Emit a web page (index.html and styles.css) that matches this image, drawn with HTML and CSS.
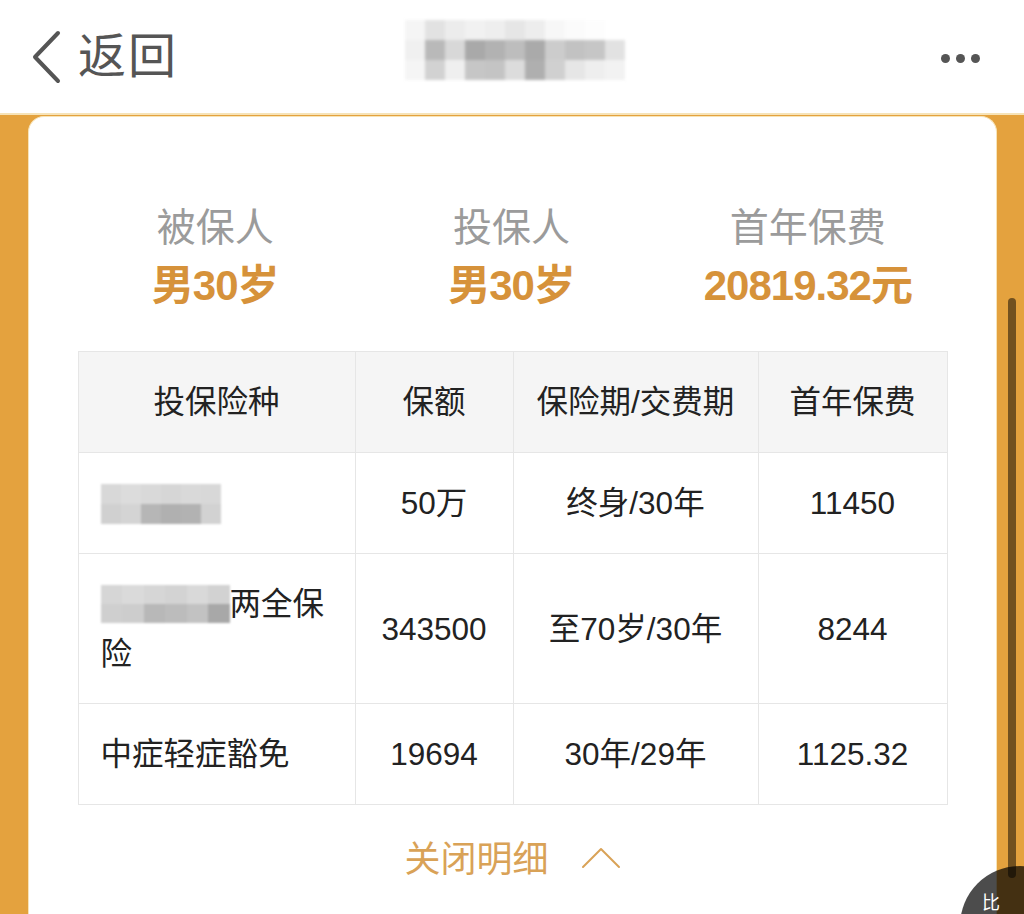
FILE: index.html
```html
<!DOCTYPE html>
<html lang="zh-CN">

<head>
	<meta charset="UTF-8">
	<title>保费明细</title>
	<link rel="stylesheet" href="styles.css">
</head>

<body>
	<header class="topbar">
		<div class="back">
			<svg class="back-icon" width="32" height="54" viewBox="0 0 32 54">
				<path d="M28 3 L5 27 L28 51" fill="none" stroke="#555" stroke-width="4" stroke-linecap="round" stroke-linejoin="round" />
			</svg>
			<span class="back-text">返回</span>
		</div>
		<div class="title-mosaic">
			<i style="background:#f5f5f5"></i><i style="background:#e2e2e2"></i><i style="background:#ececec"></i><i style="background:#f1f1f1"></i><i style="background:#eeeeee"></i><i style="background:#e6e6e6"></i><i style="background:#ededed"></i><i style="background:#f7f7f7"></i><i style="background:#fbfbfb"></i><i style="background:#fdfdfd"></i><i style="background:#fff"></i>
			<i style="background:#f0f0f0"></i><i style="background:#b9b9b9"></i><i style="background:#d8d8d8"></i><i style="background:#a9a9a9"></i><i style="background:#b2b2b2"></i><i style="background:#bdbdbd"></i><i style="background:#aaaaaa"></i><i style="background:#cccccc"></i><i style="background:#c2c2c2"></i><i style="background:#c6c6c6"></i><i style="background:#e2e2e2"></i>
			<i style="background:#f5f5f5"></i><i style="background:#d2d2d2"></i><i style="background:#efefef"></i><i style="background:#c6c6c6"></i><i style="background:#c4c4c4"></i><i style="background:#dcdcdc"></i><i style="background:#afafaf"></i><i style="background:#d0d0d0"></i><i style="background:#e6e6e6"></i><i style="background:#eeeeee"></i><i style="background:#f2f2f2"></i>
		</div>
		<div class="more"><i></i><i></i><i></i></div>
	</header>

	<main class="page">
		<section class="card">
			<div class="summary">
				<div class="summary-item">
					<div class="summary-label">被保人</div>
					<div class="summary-value">男30岁</div>
				</div>
				<div class="summary-item">
					<div class="summary-label">投保人</div>
					<div class="summary-value">男30岁</div>
				</div>
				<div class="summary-item">
					<div class="summary-label">首年保费</div>
					<div class="summary-value">20819.32元</div>
				</div>
			</div>

			<table class="plan">
				<colgroup>
					<col style="width:277px">
					<col style="width:158px">
					<col style="width:245px">
					<col style="width:189px">
				</colgroup>
				<thead>
					<tr>
						<th>投保险种</th>
						<th>保额</th>
						<th>保险期/交费期</th>
						<th>首年保费</th>
					</tr>
				</thead>
				<tbody>
					<tr>
						<td class="name">
							<span class="mosaic">
								<i style="background:#d8d8d8"></i><i style="background:#dcdcdc"></i><i style="background:#d9d9d9"></i><i style="background:#d6d6d6"></i><i style="background:#d9d9d9"></i><i style="background:#d8d8d8"></i>
								<i style="background:#d0d0d0"></i><i style="background:#d4d4d4"></i><i style="background:#b6b6b6"></i><i style="background:#b0b0b0"></i><i style="background:#b2b2b2"></i><i style="background:#d2d2d2"></i>
							</span>
						</td>
						<td>50万</td>
						<td>终身/30年</td>
						<td>11450</td>
					</tr>
					<tr class="tall">
						<td class="name">
							<span class="mosaic wide">
								<i style="background:#d6d6d6"></i><i style="background:#dadada"></i><i style="background:#d6d6d6"></i><i style="background:#d3d3d3"></i><i style="background:#d9d9d9"></i><i style="background:#d2d2d2"></i>
								<i style="background:#cfcfcf"></i><i style="background:#cdcdcd"></i><i style="background:#b8b8b8"></i><i style="background:#bcbcbc"></i><i style="background:#c2c2c2"></i><i style="background:#a8a8a8"></i>
							</span>两全保险
						</td>
						<td>343500</td>
						<td>至70岁/30年</td>
						<td>8244</td>
					</tr>
					<tr>
						<td class="name">中症轻症豁免</td>
						<td>19694</td>
						<td>30年/29年</td>
						<td>1125.32</td>
					</tr>
				</tbody>
			</table>

			<div class="toggle">
				<span>关闭明细</span>
				<svg width="40" height="24" viewBox="0 0 40 24">
					<path d="M2 21 L20 3 L38 21" fill="none" stroke="#d9a257" stroke-width="2" stroke-linecap="round" stroke-linejoin="round" />
				</svg>
			</div>
		</section>
	</main>

	<div class="scrollbar"></div>
	<div class="float-btn"><span>比</span></div>
</body>

</html>
```

FILE: styles.css
```css
html,
body {
	height: 100%;
}

body {
	font-family: "Liberation Sans", "Noto Sans CJK SC", sans-serif;
	background-color: #e4a23e;
	margin: 0;
	padding: 0;
	overflow: hidden;
	position: relative;
}

.topbar {
	height: 115px;
	background-color: #fff;
	display: flex;
	align-items: center;
	justify-content: space-between;
	padding: 0 44px 0 30px;
	box-sizing: border-box;
	position: relative;
	border-bottom: 2px solid #f6e3b8;
}

.back {
	display: flex;
	align-items: center;
	gap: 16px;
	color: #555;
}

.back-text {
	font-size: 48px;
	line-height: 1;
	letter-spacing: 2px;
}

.title-mosaic {
	position: absolute;
	left: 405px;
	top: 20px;
	width: 220px;
	height: 60px;
	display: grid;
	grid-template-columns: repeat(11, 20px);
	grid-template-rows: repeat(3, 20px);
	filter: blur(1.5px);
}

.more {
	display: flex;
	gap: 6px;
	margin-top: 4px;
}

.more i {
	width: 9px;
	height: 9px;
	border-radius: 50%;
	background-color: #555;
}

.page {
	padding: 1px 27px 0 28px;
	height: 820px;
	box-sizing: border-box;
}

.card {
	background-color: #fff;
	border-radius: 16px 16px 0 0;
	height: 100%;
	border: 1px solid #f7e4b9;
	border-bottom: none;
	box-sizing: border-box;
	padding-top: 86px;
}

.summary {
	display: grid;
	grid-template-columns: repeat(3, 1fr);
	margin: 0 40px 0 38px;
	text-align: center;
}

.summary-label {
	font-size: 39px;
	line-height: 50px;
	color: #9b9b9b;
}

.summary-value {
	font-size: 42px;
	line-height: 56px;
	margin-top: 5px;
	font-weight: bold;
	color: #d6923a;
	letter-spacing: -1px;
}

.plan {
	width: 869px;
	margin: 37px auto 0;
	border-collapse: collapse;
	table-layout: fixed;
	font-size: 31.5px;
	color: #222;
}

.plan th,
.plan td {
	border: 1px solid #e6e6e6;
	height: 100px;
	padding: 0;
	text-align: center;
	vertical-align: middle;
	font-weight: normal;
	line-height: 50px;
}

.plan th {
	background-color: #f5f5f5;
}

.plan .tall td {
	height: 149px;
}

.plan td.name {
	text-align: left;
	padding: 0 14px 0 22px;
}

.mosaic {
	display: inline-grid;
	grid-template-columns: repeat(6, 20px);
	grid-template-rows: repeat(2, 20px);
	vertical-align: middle;
	filter: blur(1px);
	margin-top: -4px;
}

.mosaic.wide {
	grid-template-columns: repeat(6, 21.5px);
	grid-template-rows: repeat(2, 19px);
}

.toggle {
	display: flex;
	justify-content: center;
	align-items: center;
	gap: 32px;
	margin-top: 30px;
	color: #d9a257;
	font-size: 36px;
	line-height: 50px;
}

.toggle svg {
	margin-top: -4px;
}

.scrollbar {
	position: absolute;
	left: 1008px;
	top: 298px;
	width: 8px;
	height: 580px;
	border-radius: 4px;
	background-color: rgba(0, 0, 0, 0.5);
}

.float-btn {
	position: absolute;
	left: 960px;
	top: 866px;
	width: 120px;
	height: 120px;
	border-radius: 50%;
	background-color: rgba(0, 0, 0, 0.7);
	color: #fff;
	font-size: 18px;
	line-height: 1;
}

.float-btn span {
	position: absolute;
	left: 22px;
	top: 28px;
}
```
